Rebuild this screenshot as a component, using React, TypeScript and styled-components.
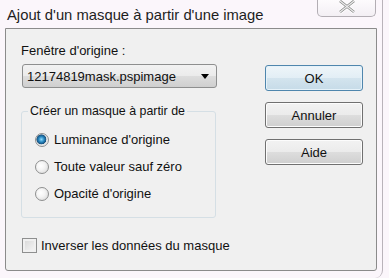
import React, { useState } from "react";
import styled, { createGlobalStyle } from "styled-components";

const Global = createGlobalStyle`
  html, body { margin: 0; padding: 0; background: #fbf6fb; overflow: hidden; }
`;

const Frame = styled.div`
  position: relative;
  width: 383px;
  height: 278px;
  border-right: 1px solid #b9b3ba;
  border-bottom-right-radius: 8px;
  box-sizing: border-box;
  font-family: "Liberation Sans", Arial, sans-serif;
`;

const TitleBar = styled.div`
  height: 28px;
  display: flex;
  align-items: flex-start;
  justify-content: space-between;
  padding-left: 7px;
`;

const Title = styled.div`
  font-size: 14.8px;
  color: #1e1e1e;
  margin-top: 6px;
  line-height: 18px;
`;

const CloseBtn = styled.div`
  width: 59px;
  height: 17px;
  margin-right: 6px;
  box-sizing: border-box;
  border: 1px solid #b3aeb4;
  border-top: none;
  border-radius: 0 0 5px 5px;
  background: linear-gradient(#fdfbfd, #f3eff4);
  display: flex;
  justify-content: center;
  align-items: flex-start;
`;

const Client = styled.div`
  margin-left: 5px;
  width: 372px;
  height: 243px;
  box-sizing: border-box;
  border: 1px solid #8b8b8b;
  border-radius: 0 0 3px 3px;
  background: #f0f0f0;
  display: flex;
  font-size: 13px;
  color: #111;
`;

const LeftCol = styled.div`
  width: 212px;
  padding: 14px 0 0 16px;
  display: flex;
  flex-direction: column;
`;

const FieldLabel = styled.div`
  line-height: 15px;
  margin-left: -1px;
`;

const Select = styled.div`
  margin-top: 6px;
  width: 195px;
  height: 24px;
  box-sizing: border-box;
  border: 1px solid #8e8f8f;
  border-radius: 3px;
  background: linear-gradient(#f2f2f2, #ebebeb 50%, #dddddd 51%, #cfcfcf);
  display: flex;
  align-items: center;
  justify-content: space-between;
  padding: 0 7px 0 4px;
`;

const Arrow = styled.div`
  width: 0;
  height: 0;
  border-left: 4px solid transparent;
  border-right: 4px solid transparent;
  border-top: 5px solid #000;
`;

const Group = styled.fieldset`
  margin: 16px 0 0 -1px;
  width: 195px;
  height: 114px;
  box-sizing: border-box;
  border: 1px solid #d5dfe5;
  border-radius: 3px;
  padding: 10px 0 0 13px;
  display: flex;
  flex-direction: column;
  gap: 6px;
`;

const Legend = styled.legend`
  padding: 0 2px;
  margin-left: -7px;
  line-height: 15px;
  white-space: nowrap;
  font-size: 12.4px;
`;

const Option = styled.label`
  display: flex;
  align-items: center;
  gap: 5px;
  height: 21px;
`;

const RadioDot = styled.span<{ $on?: boolean }>`
  width: 14px;
  height: 14px;
  border-radius: 50%;
  box-sizing: border-box;
  border: 1px solid #8e8f8f;
  background: ${({ $on }) =>
    $on
      ? "radial-gradient(circle at 45% 45%, #8fdcff 0, #2584bd 30%, #18507d 50%, #e4e4e4 56%, #f6f6f6 100%)"
      : "radial-gradient(circle at 40% 40%, #ffffff 0, #f4f4f4 40%, #d4d4d4 100%)"};
`;

const CheckRow = styled.label`
  margin-top: 20px;
  display: flex;
  align-items: center;
  gap: 4px;
  width: 300px;
`;

const CheckBox = styled.span`
  width: 15px;
  height: 15px;
  box-sizing: border-box;
  border: 1px solid #8e8f8f;
  background: linear-gradient(135deg, #d6d6d6, #f8f8f8);
  box-shadow: inset 0 0 0 2px #f0f0f0;
`;

const RightCol = styled.div`
  padding: 36px 0 0 31px;
  display: flex;
  flex-direction: column;
  gap: 11px;
`;

const Button = styled.div<{ $default?: boolean }>`
  width: 98px;
  height: 26px;
  box-sizing: border-box;
  border: 1px solid ${({ $default }) => ($default ? "#4f86ad" : "#707070")};
  border-radius: 3px;
  background: ${({ $default }) =>
    $default
      ? "linear-gradient(#eef5f9, #e2eef5 50%, #d3e4ee 51%, #c6dbe8)"
      : "linear-gradient(#f2f2f2, #ebebeb 50%, #dddddd 51%, #cfcfcf)"};
  box-shadow: inset 0 0 0 1px ${({ $default }) => ($default ? "#e6f2f9" : "#fcfcfc")};
  display: flex;
  align-items: center;
  justify-content: center;
`;

export default function App() {
  const [choice, setChoice] = useState(0);
  const options = ["Luminance d'origine", "Toute valeur sauf zéro", "Opacité d'origine"];
  return (
    <>
      <Global />
      <Frame>
        <TitleBar>
          <Title>Ajout d'un masque à partir d'une image</Title>
          <CloseBtn>
            <svg width="22" height="14" viewBox="0 0 22 14">
              <path d="M4 1 L18 12 M18 1 L4 12" stroke="#fff" strokeWidth="4.4" />
              <path d="M4 1 L18 12 M18 1 L4 12" stroke="#8a8a8a" strokeWidth="2.8" />
              <path d="M4 1 L18 12 M18 1 L4 12" stroke="#ececec" strokeWidth="1.2" />
            </svg>
          </CloseBtn>
        </TitleBar>
        <Client>
          <LeftCol>
            <FieldLabel>Fenêtre d'origine :</FieldLabel>
            <Select>
              <span>12174819mask.pspimage</span>
              <Arrow />
            </Select>
            <Group>
              <Legend>Créer un masque à partir de</Legend>
              {options.map((o, i) => (
                <Option key={o} onClick={() => setChoice(i)}>
                  <RadioDot $on={choice === i} />
                  {o}
                </Option>
              ))}
            </Group>
            <CheckRow>
              <CheckBox />
              Inverser les données du masque
            </CheckRow>
          </LeftCol>
          <RightCol>
            <Button $default>OK</Button>
            <Button>Annuler</Button>
            <Button>Aide</Button>
          </RightCol>
        </Client>
      </Frame>
    </>
  );
}
